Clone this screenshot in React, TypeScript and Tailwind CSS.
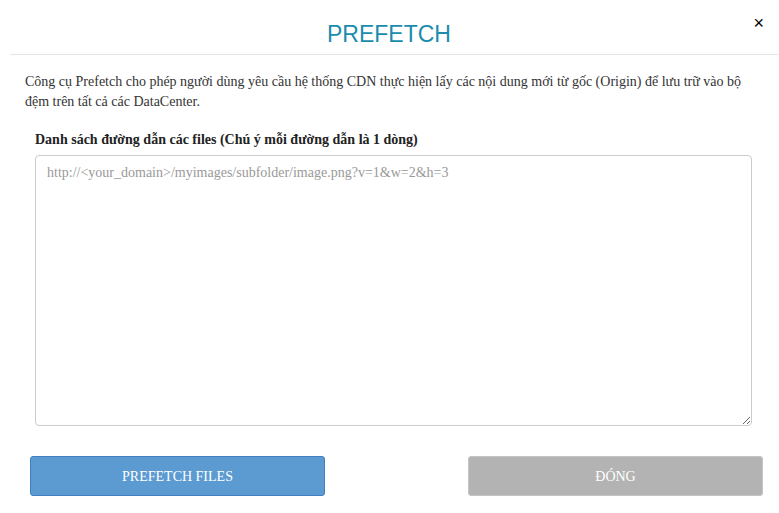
import React from 'react';

export default function App() {
  return (
    <div className="w-[779px] h-[513px] bg-white font-['Liberation_Serif',serif] text-[14px] text-[#333]">
      {/* Header */}
      <div className="relative ml-[10px] mr-[1px] h-[55px] border-b border-[#e5e5e5] flex items-center justify-center">
        <h1 className="font-['Liberation_Sans',Arial,sans-serif] text-[23px] leading-none text-[#1a8cae] pt-[14px] pr-[10px]">
          PREFETCH
        </h1>
        <button className="absolute right-[14px] top-[14px] font-['Liberation_Sans',Arial,sans-serif] text-[18px] leading-none text-black">
          ×
        </button>
      </div>

      {/* Body */}
      <div className="px-[25px] pt-[17px]">
        <p className="leading-[20px] pr-[5px]">
          Công cụ Prefetch cho phép người dùng yêu cầu hệ thống CDN thực hiện lấy các nội dung mới từ gốc (Origin) để lưu trữ vào bộ đệm trên tất cả các DataCenter.
        </p>
        <div className="pl-[10px] pr-[2px] mt-[18px]">
          <label className="block font-bold leading-[20px] text-[#222]">
            Danh sách đường dẫn các files (Chú ý mỗi đường dẫn là 1 dòng)
          </label>
          <textarea
            className="block mt-[5px] w-full h-[271px] border border-[#ccc] rounded-[4px] px-[11px] py-[7px] leading-[20px] text-[14px] placeholder:text-[#999] outline-none"
            placeholder="http://<your_domain>/myimages/subfolder/image.png?v=1&w=2&h=3"
          />
        </div>
      </div>

      {/* Footer buttons */}
      <div className="flex justify-between pl-[30px] pr-[16px] mt-[30px]">
        <button className="w-[295px] h-[40px] rounded-[3px] bg-[#5c9ad2] border border-[#3f80c2] text-white text-[14px]">
          PREFETCH FILES
        </button>
        <button className="w-[295px] h-[40px] rounded-[3px] bg-[#b3b3b3] border border-[#c4c4c4] text-white text-[14px]">
          ĐÓNG
        </button>
      </div>
    </div>
  );
}
